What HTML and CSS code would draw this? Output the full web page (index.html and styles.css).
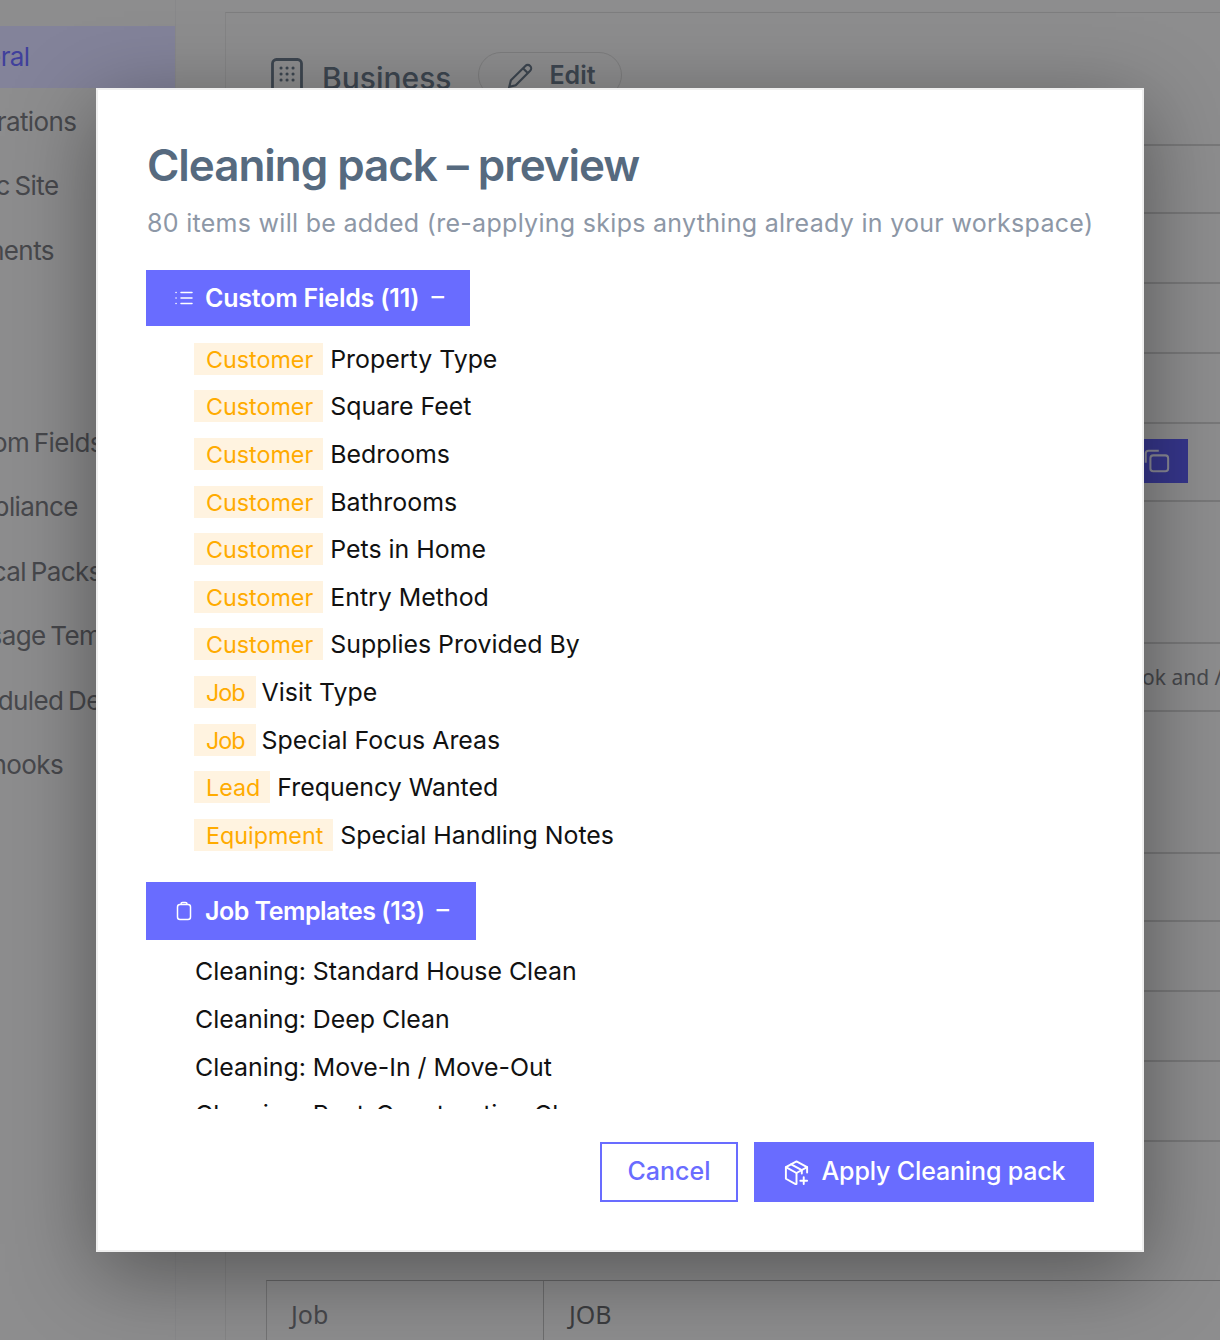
FILE: index.html
```html
<!DOCTYPE html>
<html lang="en">
<head>
<meta charset="utf-8">
<title>Cleaning pack - preview</title>
<link rel="stylesheet" href="styles.css">
</head>
<body>
<div class="page">
  <nav class="sidebar">
    <a class="nav-item active">General</a>
    <a class="nav-item">Integrations</a>
    <a class="nav-item">Public Site</a>
    <a class="nav-item">Payments</a>
    <div class="nav-gap"></div>
    <a class="nav-item">Custom Fields</a>
    <a class="nav-item">Compliance</a>
    <a class="nav-item">Vertical Packs</a>
    <a class="nav-item">Message Templates</a>
    <a class="nav-item">Scheduled Deliveries</a>
    <a class="nav-item">Webhooks</a>
  </nav>
  <main class="card">
    <div class="card-head">
      <svg class="biz-icon" viewBox="0 0 32 40" fill="none" stroke="currentColor" stroke-width="2.800"><rect x="1.500" y="1.500" width="29" height="37" rx="4"/><path d="M10 10h.1M16 10h.1M22 10h.1M10 16h.1M16 16h.1M22 16h.1M10 22h.1M16 22h.1M22 22h.1" stroke-linecap="round" stroke-width="3"/></svg>
      <span class="biz-title">Business</span>
      <span class="edit-pill">
        <svg class="edit-icon" viewBox="0 0 28 28" fill="none" stroke="currentColor" stroke-width="2"><path d="M4 25l1.500-6L19 5.500a3 3 0 0 1 4.500 4.500L10 23.500z"/><path d="M17 8l4 4"/></svg>
        Edit
      </span>
    </div>
    <div class="row h68"></div>
    <div class="row h70"></div>
    <div class="row h70"></div>
    <div class="row h70"></div>
    <div class="row h78"><span class="copy-btn"><svg class="copy-icon" viewBox="0 0 30 30" fill="none" stroke="currentColor" stroke-width="2.200"><rect x="9" y="9" width="19" height="17" rx="3"/><path d="M4 17V7a3 3 0 0 1 3-3h11"/></svg></span></div>
    <div class="row h142"></div>
    <div class="row h68 note"><span class="row-text">Checkbook and / or ACH</span></div>
    <div class="row h142"></div>
    <div class="row h68"></div>
    <div class="row h70"></div>
    <div class="row h70"></div>
    <div class="row h80"></div>
    <div class="row h139"></div>
    <div class="table-row">
      <span class="cell-a">Job</span>
      <span class="cell-b">JOB</span>
    </div>
  </main>
</div>

<div class="modal">
  <h1 class="modal-title">Cleaning pack – preview</h1>
  <p class="modal-sub">80 items will be added (re-applying skips anything already in your workspace)</p>
  <div class="modal-list">
    <button class="section-btn fields">
      <svg class="sec-icon" viewBox="0 0 20 20" fill="none" stroke="currentColor" stroke-width="1.500" stroke-linecap="round"><path d="M7 4.500h11M7 10h11M7 15.500h11M2 4.500h.1M2 10h.1M2 15.500h.1"/></svg>
      <span>Custom Fields (11)</span>
      <span class="minus">–</span>
    </button>
    <ul class="items first">
      <li><span class="tag">Customer</span>Property Type</li>
      <li><span class="tag">Customer</span>Square Feet</li>
      <li><span class="tag">Customer</span>Bedrooms</li>
      <li><span class="tag">Customer</span>Bathrooms</li>
      <li><span class="tag">Customer</span>Pets in Home</li>
      <li><span class="tag">Customer</span>Entry Method</li>
      <li><span class="tag">Customer</span>Supplies Provided By</li>
      <li><span class="tag short">Job</span>Visit Type</li>
      <li><span class="tag short">Job</span>Special Focus Areas</li>
      <li><span class="tag">Lead</span>Frequency Wanted</li>
      <li><span class="tag">Equipment</span>Special Handling Notes</li>
    </ul>
    <button class="section-btn tall">
      <svg class="sec-icon" viewBox="0 0 20 20" fill="none" stroke="currentColor" stroke-width="1.500" stroke-linejoin="round"><rect x="3.500" y="3.500" width="13" height="15" rx="2.500"/><path d="M7 3.500V3a1.500 1.500 0 0 1 1.500-1.500h3A1.500 1.500 0 0 1 13 3v.500"/></svg>
      <span>Job Templates (13)</span>
      <span class="minus">–</span>
    </button>
    <ul class="items plain">
      <li>Cleaning: Standard House Clean</li>
      <li>Cleaning: Deep Clean</li>
      <li>Cleaning: Move-In / Move-Out</li>
      <li>Cleaning: Post-Construction Clean</li>
      <li>Cleaning: Recurring Weekly</li>
    </ul>
  </div>
  <div class="modal-foot">
    <button class="btn-cancel">Cancel</button>
    <button class="btn-apply">
      <svg class="apply-icon" viewBox="0 0 28 28" fill="none" stroke="currentColor" stroke-width="2" stroke-linecap="round" stroke-linejoin="round"><path d="M13 26L3 20.500V8.500L14 2.500l11 6V14"/><path d="M3 8.500L14 14.500l11-6"/><path d="M14 14.500V26"/><path d="M8.500 5.500l11 6V15"/><path d="M21.500 19v7M18 22.500h7"/></svg>
      <span class="apply-label">Apply Cleaning pack</span>
    </button>
  </div>
</div>
</body>
</html>
```
FILE: styles.css
```css
* { box-sizing: border-box; }
html, body { margin: 0; height: 100%; }
body {
  width: 1220px;
  height: 1340px;
  overflow: hidden;
  position: relative;
  background: #8d8d8e;
  font-family: Inter, "Liberation Sans", sans-serif;
}
.page {
  display: flex;
  height: 1340px;
  align-items: flex-start;
  overflow: hidden;
}
.sidebar {
  flex: 0 0 176px;
  height: 1340px;
  padding-top: 26px;
  border-right: 1px solid #88888a;
  margin-right: 49px;
  overflow: hidden;
}
.nav-item {
  display: block;
  height: 64.4px;
  line-height: 62px;
  margin-left: -62px;
  width: 300px;
  font-size: 26px;
  color: #47484c;
  white-space: nowrap;
  letter-spacing: -0.6px;
  word-spacing: -2px;
}
.nav-item.active {
  color: #40409c;
  background: #83839a;
  height: 62px;
  margin-bottom: 3px;
}
.nav-gap { height: 127.8px; }
.card {
  flex: 0 0 1100px;
  height: 1340px;
  margin-top: 12px;
  padding-left: 40px;
  border-top: 1px solid #7e7e7f;
  border-left: 1px solid #848485;
}
.card-head {
  display: flex;
  align-items: center;
  height: 131px;
  padding: 0 0 18px 5px;
  color: #3d4650;
}
.biz-icon { width: 32px; height: 40px; margin-top: 16px; }
.biz-title { font-size: 30px; font-weight: 500; margin: 16px 0 0 19px; }
.edit-pill {
  display: flex;
  align-items: center;
  gap: 14px;
  height: 46px;
  width: 144px;
  margin: 10px 0 0 27px;
  padding-left: 26px;
  border: 1px solid #7d7d7e;
  border-radius: 24px;
  font-size: 25px;
  font-weight: 600;
}
.edit-icon { width: 30px; height: 30px; }
.row {
  display: flex;
  align-items: center;
  border-top: 2px solid #787879;
  margin-left: -40px;
  padding-left: 876px;
}
.row.note { padding-left: 831px; }
.h68 { height: 68px; }
.h70 { height: 70px; }
.h78 { height: 78px; }
.h80 { height: 80px; }
.h139 { height: 139px; }
.h142 { height: 142px; }
.copy-btn {
  display: flex;
  align-items: center;
  justify-content: flex-end;
  width: 86px;
  height: 44px;
  margin-top: -3px;
  padding-right: 18px;
  background: #36368c;
  color: #8a8a96;
}
.copy-icon { width: 28px; height: 28px; }
.row-text {
  font-size: 21px;
  color: #47484c;
  white-space: nowrap;
  font-family: "Noto Sans", sans-serif;
}
.table-row {
  display: flex;
  height: 120px;
  margin-top: 1px;
  border-top: 1px solid #666667;
  border-left: 1px solid #737374;
  font-size: 25px;
  font-family: "Noto Sans", sans-serif;
  color: #3c3d40;
}
.cell-a {
  width: 277px;
  padding: 16px 0 0 24px;
  border-right: 1px solid #6d6d6e;
  color: #47484c;
}
.cell-b { padding: 16px 0 0 25px; }

.modal {
  position: absolute;
  left: 96px;
  top: 88px;
  width: 1048px;
  height: 1164px;
  display: flex;
  flex-direction: column;
  padding: 47px 48px 48px 50px;
  background: #fff;
  border: 2px solid #efefef;
  box-shadow: 0 20px 80px rgba(0, 0, 0, .4);
}
.modal-title {
  margin: 0 0 0 -1px;
  font-size: 44px;
  line-height: 56px;
  font-weight: 600;
  letter-spacing: -1.050px;
  color: #566a7f;
}
.modal-sub {
  margin: 13px 0 30px -1px;
  font-size: 25px;
  line-height: 34px;
  letter-spacing: 0.290px;
  color: #8d97a6;
  white-space: nowrap;
}
.modal-list {
  flex: 1 1 0;
  min-height: 0;
  overflow: hidden;
  margin-left: -2px;
}
.section-btn {
  display: inline-flex;
  align-items: center;
  height: 56px;
  padding: 0 26px 0 28px;
  border: 0;
  background: #696cff;
  color: #fff;
  font: 600 25px Inter, "Liberation Sans", sans-serif;
  letter-spacing: -0.5px;
  white-space: nowrap;
}
.section-btn.fields { letter-spacing: -0.220px; }
.section-btn.tall { height: 58px; margin-top: 23px; padding-right: 28px; }
.sec-icon { width: 20px; height: 20px; margin-right: 11px; }
.minus { margin: 0 0 4px 12px; font-weight: 500; }
.items {
  list-style: none;
  margin: 9px 0 0;
  padding: 0 0 0 48px;
}
.items.plain { margin-top: 8px; padding-left: 49px; }
.items li {
  display: flex;
  align-items: center;
  height: 47.6px;
  font-size: 24.900px;
  color: #111;
  white-space: nowrap;
}
.tag {
  display: inline-block;
  height: 32px;
  line-height: 33px;
  padding: 0 10px 0 12px;
  margin-right: 7px;
  background: #fff3e0;
  color: #ffab00;
  font-size: 23.300px;
}
.tag.short { letter-spacing: -1px; margin-right: 6px; padding-right: 11px; }
.modal-foot {
  display: flex;
  justify-content: flex-end;
  gap: 16px;
  padding-top: 33px;
}
.modal-foot button {
  height: 60px;
  padding-bottom: 4px;
  font: 500 25px Inter, "Liberation Sans", sans-serif;
  white-space: nowrap;
}
.btn-cancel {
  width: 138px;
  background: #fff;
  border: 2px solid #696cff;
  color: #696cff;
}
.btn-apply {
  display: flex;
  align-items: center;
  justify-content: center;
  gap: 12px;
  width: 340px;
  border: 0;
  background: #696cff;
  color: #fff;
}
.apply-label { letter-spacing: -0.150px; }
.apply-icon { width: 27px; height: 27px; margin-top: 3px; }
```
